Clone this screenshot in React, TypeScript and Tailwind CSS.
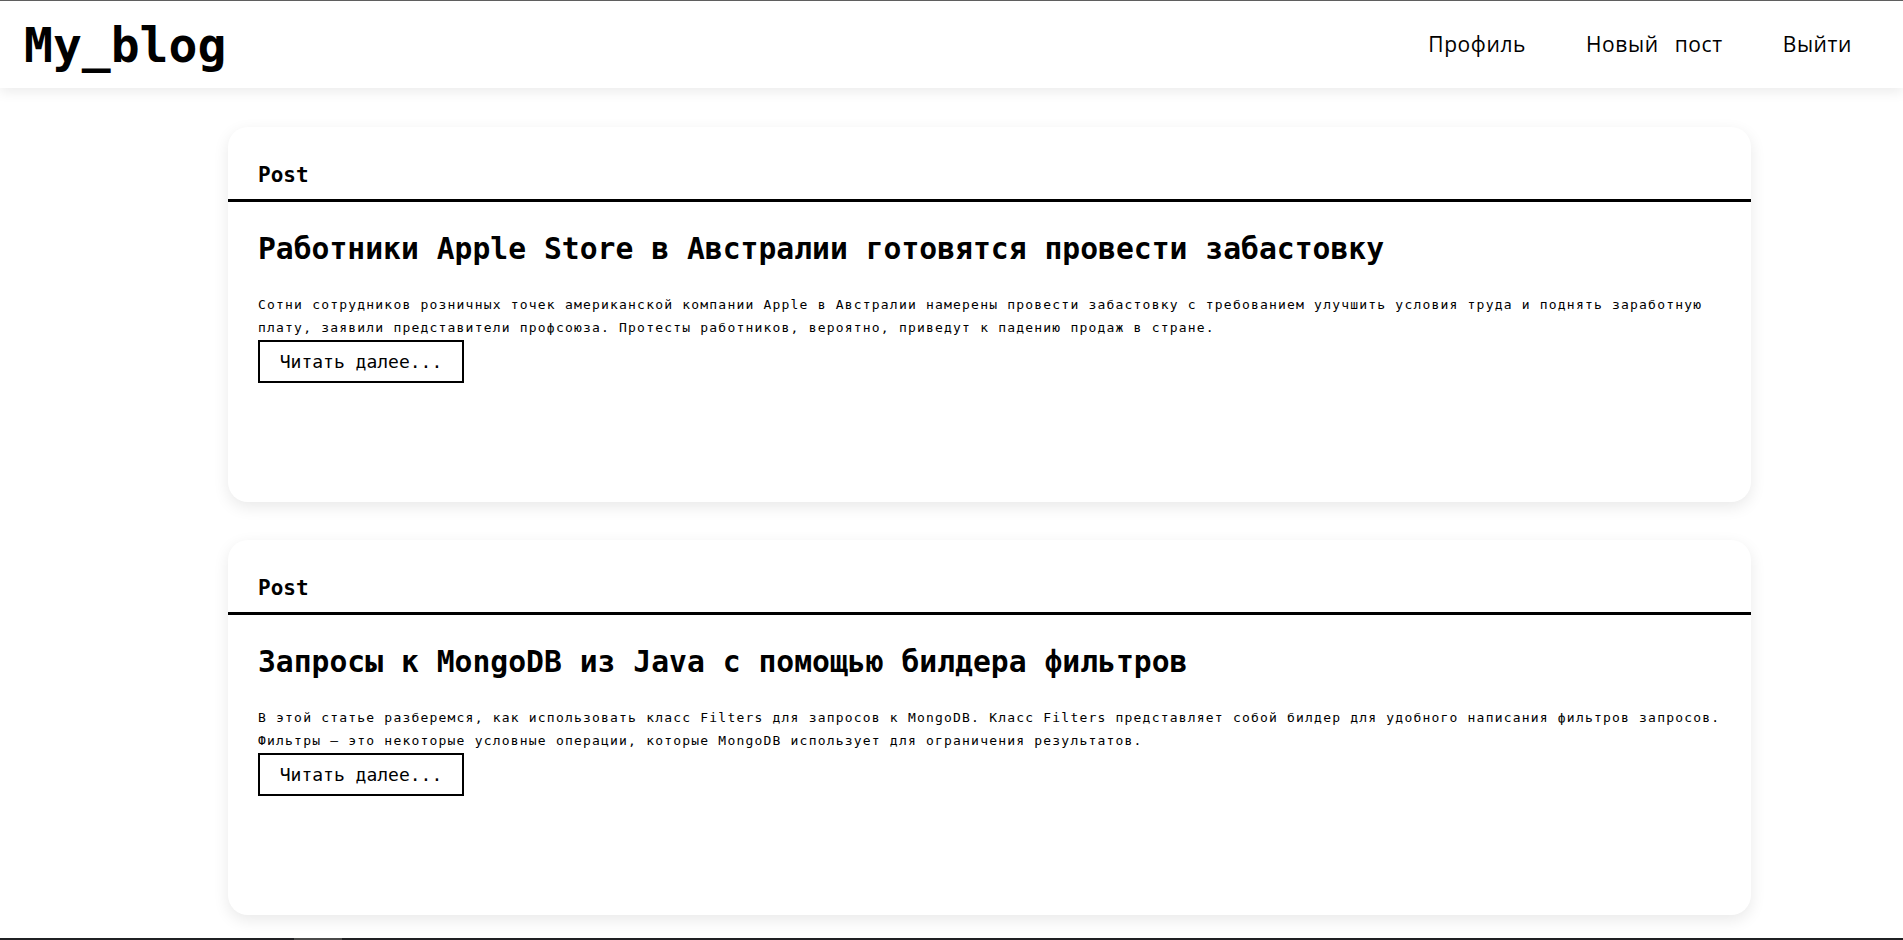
const posts = [
  {
    title: "Работники Apple Store в Австралии готовятся провести забастовку",
    text: "Сотни сотрудников розничных точек американской компании Apple в Австралии намерены провести забастовку с требованием улучшить условия труда и поднять заработную плату, заявили представители профсоюза. Протесты работников, вероятно, приведут к падению продаж в стране.",
  },
  {
    title: "Запросы к MongoDB из Java с помощью билдера фильтров",
    text: "В этой статье разберемся, как использовать класс Filters для запросов к MongoDB. Класс Filters представляет собой билдер для удобного написания фильтров запросов. Фильтры — это некоторые условные операции, которые MongoDB использует для ограничения результатов.",
  },
];

function Header() {
  return (
    <header className="h-[88px] border-t border-[#5f5f5f] bg-white flex items-center justify-between pl-[24px] pr-[51px] shadow-[0_4px_12px_rgba(0,0,0,0.08)] relative z-10">
      <div className="font-['DejaVu_Sans_Mono',monospace] font-bold text-[48px] leading-none text-black">
        My_blog
      </div>
      <nav className="flex items-center gap-[60px] font-['Open_Sans',sans-serif] text-[21px] tracking-[0.6px] text-black">
        <a href="#">Профиль</a>
        <a href="#" className="[word-spacing:10px]">Новый пост</a>
        <a href="#">Выйти</a>
      </nav>
    </header>
  );
}

function PostCard({ title, text }: { title: string; text: string }) {
  return (
    <article className="h-[375px] bg-white rounded-[20px] shadow-[0_5px_16px_rgba(0,0,0,0.09)] font-['DejaVu_Sans_Mono',monospace] text-black">
      <div className="px-[30px] pt-[36px] pb-[11px] border-b-[3px] border-black">
        <h3 className="text-[21px] leading-[25px] font-bold">Post</h3>
      </div>
      <div className="pl-[30px] pr-[20px] pt-[29px]">
        <h2 className="text-[29.7px] leading-[36px] font-bold">{title}</h2>
        <p className="mt-[26px] text-[13px] leading-[23px] tracking-[1.2px]">{text}</p>
        <button className="mt-px w-[206px] h-[43px] border-2 border-black flex items-center justify-center text-[18px]">
          Читать далее...
        </button>
      </div>
    </article>
  );
}

export default function App() {
  return (
    <div className="min-h-screen bg-white">
      <Header />
      <main className="pt-[39px] pb-[40px] ml-[228px] w-[1523px] flex flex-col gap-[38px]">
        {posts.map((p) => (
          <PostCard key={p.title} title={p.title} text={p.text} />
        ))}
      </main>
      <div className="fixed bottom-0 left-0 w-full h-[2px] bg-[#202124]">
        <div className="ml-[294px] w-[48px] h-full bg-[#4a4a4a]" />
      </div>
    </div>
  );
}
